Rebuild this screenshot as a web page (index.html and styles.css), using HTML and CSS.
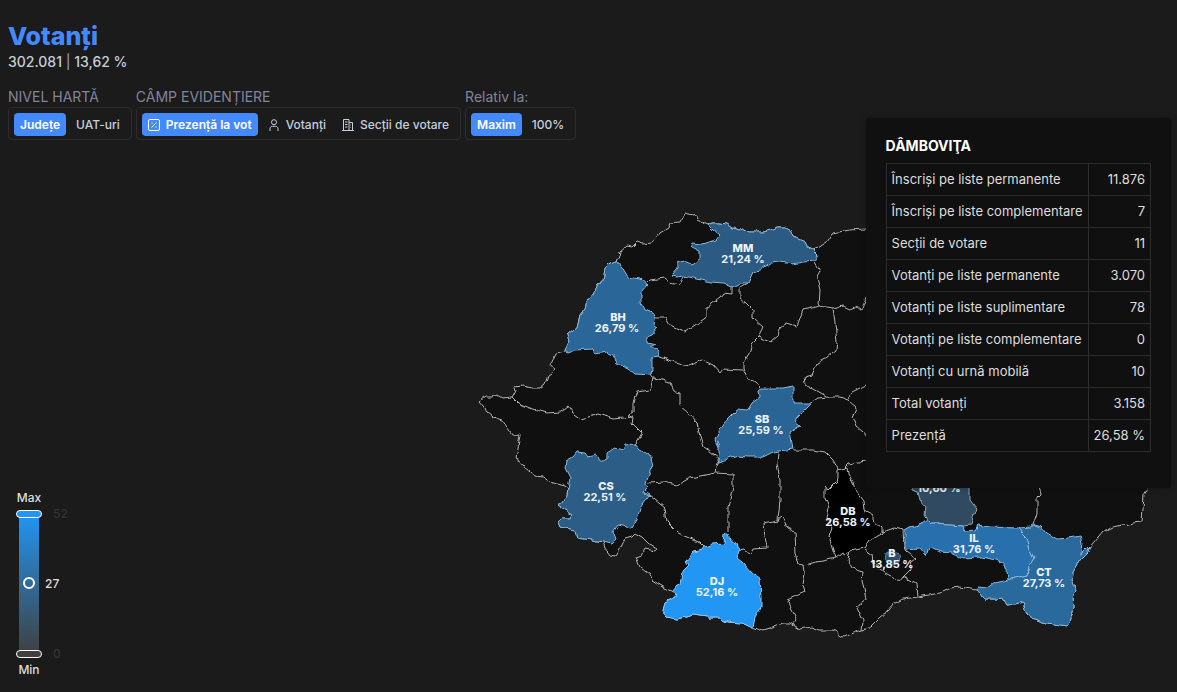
FILE: index.html
```html
<!DOCTYPE html>
<html lang="ro">
<head>
    <meta charset="UTF-8">
    <meta name="viewport" content="width=device-width, initial-scale=1.0">
    <title>Votanți</title>
    <link rel="stylesheet" href="styles.css">
</head>
<body>
<main class="page">

    <!-- Harta -->
    <svg class="map" viewBox="0 0 1177 692" role="img" aria-label="Harta județelor">
        <defs>
            <filter id="rough" x="0" y="0" width="1177" height="692" filterUnits="userSpaceOnUse" color-interpolation-filters="sRGB">
                <feTurbulence type="fractalNoise" baseFrequency="0.15" numOctaves="1" seed="4" result="noise"/>
                <feDisplacementMap in="SourceGraphic" in2="noise" scale="6" xChannelSelector="R" yChannelSelector="G"/>
            </filter>
        </defs>
        <g class="counties" filter="url(#rough)">
            <path class="land" d="M480,401 485,397 493,397 497,395 502,398 512,397 515,392 514,387 523,386 532,388 540,388 545,384 548,375 554,371 551,364 556,353 565,351 569,342 567,335 577,327 580,315 585,308 588,300 594,293 597,283 603,282 605,268 610,263 617,261 620,252 627,246 632,247 637,242 643,244 652,243 660,233 668,228 670,223 680,222 685,213 693,215 697,220 708,225 712,223 720,223 727,224 733,228 738,230 743,228 750,232 763,232 772,230 777,227 785,227 790,230 793,237 805,242 808,248 813,250 818,248 827,242 833,233 850,230 867,229 900,215 1000,240 1040,330 1090,400 1148,484 1147,490 1144,495 1142,522 1133,523 1113,527 1103,532 1095,542 1088,550 1080,560 1073,572 1072,580 1076,592 1073,597 1074,607 1070,617 1068,626 1047,623 1032,618 1027,615 1023,602 1015,604 1007,605 1003,598 995,599 985,599 982,594 976,590 960,587 950,588 940,593 917,597 903,599 893,604 888,610 880,617 870,627 862,630 843,637 832,630 820,630 812,627 800,629 790,623 782,623 770,628 760,631 753,628 742,623 728,622 720,618 710,618 707,616 693,614 687,617 677,619 667,617 663,612 665,602 675,597 676,593 672,591 665,588 652,580 650,575 640,567 636,557 642,555 645,549 655,551 657,548 648,543 642,537 635,533 632,536 625,538 620,548 615,556 610,555 605,548 603,542 593,540 577,538 575,530 560,527 558,522 562,518 570,518 572,514 558,505 562,503 567,495 568,488 565,486 550,482 543,477 535,476 525,468 520,461 516,459 518,448 520,434 513,435 507,427 502,420 493,417 487,412 485,407Z"/>

            <g class="borders">
                <path d="M647,283 650,280 665,278 670,282 679,284 683,277"/>
                <path d="M655,317 665,317 670,325 685,332 698,323 707,317 707,307 720,297 723,293 732,294 732,287"/>
                <path d="M748,283 740,288 740,298 748,305 753,310 753,318 763,327 758,337 770,342 778,335 780,328 787,323 797,326 803,310 819,306"/>
                <path d="M815,262 820,270 817,278 820,290 819,306 833,308 843,306 850,309 857,306 862,310 866,297"/>
                <path d="M833,308 835,323 837,343 836,350 823,360 817,363 812,375 805,377 806,385 812,388 828,397"/>
                <path d="M758,337 752,343 750,352 743,363 743,368 747,377 760,387"/>
                <path d="M660,357 675,362 688,366 702,360 713,365 720,373 723,369 743,370"/>
                <path d="M812,402 818,398 828,397 840,397 848,400 852,392 868,384"/>
                <path d="M848,400 857,408 853,417 857,427 868,436"/>
                <path d="M793,450 813,450 825,452 833,460 838,469"/>
                <path d="M845,467 848,464 857,462 868,461"/>
                <path d="M778,453 777,463 780,480 780,500 778,520 763,523 765,537 767,547 753,548 750,554 745,550 738,551"/>
                <path d="M778,520 782,517 787,528 795,532 796,553 799,564 803,565 827,560 836,558"/>
                <path d="M803,565 804,573 802,583 805,592 787,600 797,620 792,626"/>
                <path d="M850,551 848,560 852,568 863,572 862,582 865,593 866,600 857,607 863,620 862,630"/>
                <path d="M648,483 663,482 677,485 690,478 715,473 733,474 733,487 728,507 728,532"/>
                <path d="M715,473 717,463 719,462"/>
                <path d="M649,495 665,508 667,522 678,533 700,542 705,547"/>
                <path d="M651,375 653,378 663,380 670,382 675,392 680,393 680,405 688,412 697,422 700,437 703,447 717,457 719,462"/>
                <path d="M653,378 650,390 637,392 633,402 633,412 628,415 633,418 632,423 642,433 637,442 635,444"/>
                <path d="M512,397 518,403 530,408 547,413 560,412 568,406 572,412 582,419 598,414 613,419 633,417"/>
                <path d="M882,532 893,528 903,530 904,548 908,552 916,558 910,563 910,570 903,577 900,581 895,578 885,573 873,563 872,555 865,550"/>
                <path d="M903,577 916,584 917,597"/>
                <path d="M1038,484 1041,494 1037,498 1037,513 1033,525"/>
            </g>

            <path class="c-bh" d="M567,353 565,350 569,342 567,335 577,327 580,315 585,308 588,300 594,293 597,283 603,282 605,268 610,263 617,261 622,267 628,277 640,279 647,285 641,292 641,303 644,310 653,313 655,318 654,325 658,328 652,335 647,337 647,342 656,344 650,347 657,350 660,357 652,358 652,368 651,375 635,374 628,368 617,363 613,355 607,352 595,354 592,349 575,350Z"/>
            <path class="c-mm" d="M708,225 712,223 720,223 727,224 733,228 738,230 743,228 750,232 763,232 772,230 777,227 785,227 790,230 793,237 805,242 808,248 813,250 818,255 815,261 803,262 793,264 780,262 770,263 762,269 753,272 748,283 740,283 732,287 723,283 710,282 693,278 683,276 677,277 671,276 678,268 678,263 683,261 692,265 699,260 699,252 691,248 693,243 703,244 715,240 719,235 713,230Z"/>
            <path class="c-sb" d="M793,386 793,403 803,403 812,403 807,408 797,418 795,422 800,426 790,432 793,449 773,452 763,457 748,457 738,456 719,462 719,447 716,440 720,430 727,420 735,412 737,409 747,410 752,402 759,397 758,390 762,388 783,388Z"/>
            <path class="c-cs" d="M568,488 570,478 565,468 566,461 573,457 577,452 585,453 588,457 597,455 600,461 607,459 607,453 615,448 623,450 625,445 635,444 640,450 650,455 653,465 648,477 646,483 648,487 643,492 649,495 640,508 637,520 632,528 618,525 613,532 616,540 612,544 603,542 593,540 577,538 575,530 560,527 558,522 562,518 570,518 572,514 558,505 562,503 567,495Z"/>
            <path class="c-dj" d="M705,547 712,544 724,543 725,533 728,535 730,540 737,543 739,550 737,558 743,563 752,573 760,579 761,597 761,607 755,617 753,628 742,623 728,622 720,618 710,618 707,616 693,614 687,617 677,619 667,617 663,612 665,602 675,597 676,593 672,591 677,585 680,584 682,572 689,565 686,561 693,552 703,550Z"/>
            <path class="c-db" d="M838,470 845,468 848,467 849,475 853,482 855,490 863,500 864,510 873,515 873,520 882,528 882,533 870,540 865,548 850,551 845,555 842,553 836,558 833,550 829,537 832,528 827,518 829,508 825,498 825,486 828,490 836,482 838,477Z"/>
            <path class="c-bz" d="M912,482 912,490 918,492 920,500 926,507 925,515 928,520 932,524 950,525 963,526 971,525 973,517 976,508 970,500 970,482Z"/>
            <path class="c-b" d="M886,553 892,550 898,553 900,559 896,564 889,564 885,559Z"/>
            <path class="c-il" d="M905,530 910,527 923,524 928,520 932,524 950,525 963,526 965,531 975,530 978,525 990,527 1018,528 1022,533 1027,538 1030,550 1034,558 1030,565 1027,575 1008,580 1007,570 1003,567 1003,562 983,557 960,558 952,553 940,552 932,548 928,550 926,556 920,549 905,550Z"/>
            <path class="c-ct" d="M1018,528 1032,527 1033,525 1042,527 1047,533 1057,539 1070,538 1080,536 1082,542 1081,555 1090,546 1088,552 1080,560 1073,572 1072,580 1076,592 1073,597 1074,607 1070,617 1068,626 1047,623 1032,618 1027,615 1023,602 1015,604 1007,605 1003,598 995,599 985,599 982,594 976,590 978,587 988,588 995,583 1008,580 1027,575 1030,565 1034,558 1030,550 1027,538 1022,533Z"/>
        </g>

        <g class="names">
            <text><tspan class="code" x="743" y="252">MM</tspan><tspan x="743" y="263">21,24 %</tspan></text>
            <text><tspan class="code" x="618" y="321">BH</tspan><tspan x="617" y="332">26,79 %</tspan></text>
            <text><tspan class="code" x="762" y="423">SB</tspan><tspan x="761" y="434">25,59 %</tspan></text>
            <text><tspan class="code" x="606" y="490">CS</tspan><tspan x="605" y="501">22,51 %</tspan></text>
            <text><tspan class="code" x="717" y="585">DJ</tspan><tspan x="717" y="596">52,16 %</tspan></text>
            <text><tspan class="code" x="848" y="515">DB</tspan><tspan x="848" y="526">26,58 %</tspan></text>
            <text><tspan class="code" x="892" y="557">B</tspan><tspan x="892" y="568">13,85 %</tspan></text>
            <text><tspan class="code" x="974" y="542">IL</tspan><tspan x="974" y="553">31,76 %</tspan></text>
            <text><tspan class="code" x="1044" y="576">CT</tspan><tspan x="1044" y="587">27,73 %</tspan></text>
            <text><tspan x="939" y="492">10,60 %</tspan></text>
        </g>
    </svg>

    <header class="header">
        <h1>Votanți</h1>
        <p class="total">302.081 <span>|</span> 13,62 %</p>

        <div class="filters">
            <div class="filter" role="group" aria-labelledby="levelLabel">
                <span class="filter-label" id="levelLabel">NIVEL HARTĂ</span>
                <div class="segmented">
                    <button class="active">Județe</button>
                    <button>UAT-uri</button>
                </div>
            </div>
            <div class="filter" role="group" aria-labelledby="fieldLabel">
                <span class="filter-label" id="fieldLabel">CÂMP EVIDENȚIERE</span>
                <div class="segmented">
                    <button class="active">
                        <svg class="icon" viewBox="0 0 12 12"><rect x="0.5" y="0.5" width="11" height="11" rx="1.5"/><path d="M3.5 8.5l5-5M3.6 4h1M7.6 8h1"/></svg>
                        Prezență la vot
                    </button>
                    <button>
                        <svg class="icon" viewBox="0 0 12 12"><circle cx="6" cy="3.2" r="2.5"/><path d="M2 12V9.8C2 8.2 3.2 7.3 4.6 7.3h2.8C8.8 7.3 10 8.2 10 9.8V12"/></svg>
                        Votanți
                    </button>
                    <button>
                        <svg class="icon" viewBox="0 0 12 12"><path d="M0 11.5h12M1.5 11.5V.5H7v11M7 3.5h3.500v8M3 3h2.500M3 5.500h2.500M3 8h2.500M8.500 6h.5M8.500 8.500h.5"/></svg>
                        Secții de votare
                    </button>
                </div>
            </div>
            <div class="filter" role="group" aria-labelledby="relLabel">
                <span class="filter-label" id="relLabel">Relativ la:</span>
                <div class="segmented">
                    <button class="active">Maxim</button>
                    <button>100%</button>
                </div>
            </div>
        </div>
    </header>

    <!-- Scala de culori -->
    <div class="scale">
        <label for="scaleMax">Max</label>
        <div class="scale-body">
            <div class="scale-track">
                <input type="range" id="scaleMax" class="range-max" min="0" max="52" value="52">
                <input type="range" id="scaleMin" class="range-min" min="0" max="52" value="0">
                <span class="scale-dot"></span>
            </div>
            <div class="scale-values">
                <span class="dim">52</span>
                <span class="current">27</span>
                <span class="dim">0</span>
            </div>
        </div>
        <label for="scaleMin">Min</label>
    </div>

    <!-- Detalii județ -->
    <aside class="details">
        <h2>DÂMBOVIŢA</h2>
        <table>
            <tr><th scope="row">Înscriși pe liste permanente</th><td>11.876</td></tr>
            <tr><th scope="row">Înscriși pe liste complementare</th><td>7</td></tr>
            <tr><th scope="row">Secții de votare</th><td>11</td></tr>
            <tr><th scope="row">Votanți pe liste permanente</th><td>3.070</td></tr>
            <tr><th scope="row">Votanți pe liste suplimentare</th><td>78</td></tr>
            <tr><th scope="row">Votanți pe liste complementare</th><td>0</td></tr>
            <tr><th scope="row">Votanți cu urnă mobilă</th><td>10</td></tr>
            <tr><th scope="row">Total votanți</th><td>3.158</td></tr>
            <tr><th scope="row">Prezență</th><td>26,58 %</td></tr>
        </table>
    </aside>

</main>
</body>
</html>
```
FILE: styles.css
```css
* {
    box-sizing: border-box;
}

body {
    margin: 0;
    background-color: #1b1b1b;
    color: #dedede;
    font-family: Inter, "Liberation Sans", sans-serif;
    font-size: 13px;
}

.page {
    position: relative;
    min-height: 100vh;
    overflow: hidden;
}

/* map */
.map {
    position: absolute;
    top: 0;
    left: 0;
    width: 100%;
    height: 100%;
}

.counties path {
    stroke: #b4b4b4;
    stroke-width: 1;
    stroke-linejoin: round;
}

.counties .land {
    fill: #101010;
}

.counties .borders path {
    fill: none;
}

.counties .c-bh { fill: #2a6798; stroke: #8ab8dc; }
.counties .c-mm { fill: #2b5b83; stroke: #8ab8dc; }
.counties .c-sb { fill: #2a6494; stroke: #8ab8dc; }
.counties .c-cs { fill: #2b5d86; stroke: #8ab8dc; }
.counties .c-dj { fill: #2196f3; stroke: #8cc8f8; }
.counties .c-db { fill: #000; }
.counties .c-bz { fill: #2f4a61; stroke: #8fa3b3; }
.counties .c-b { fill: #2e4c66; stroke: #5a7f9e; }
.counties .c-il { fill: #2870ad; stroke: #8ab8dc; }
.counties .c-ct { fill: #29699c; stroke: #8ab8dc; }

.names text {
    fill: #eef3fa;
    font-size: 11px;
    font-weight: 700;
    text-anchor: middle;
}

.names .code {
    font-weight: 800;
}

/* header */
.header {
    position: relative;
    padding: 22px 8px 0;
}

h1 {
    margin: 0;
    color: #4589ff;
    font-size: 25px;
    font-weight: 800;
    line-height: 28px;
}

.total {
    margin: 2px 0 0;
    color: #c5cfdc;
    font-size: 14px;
    font-weight: 500;
    line-height: 20px;
}

.total span {
    color: #8d8d9b;
}

.filters {
    display: flex;
    flex-wrap: wrap;
    gap: 4px;
    margin-top: 15px;
}

.filter-label {
    display: block;
    color: #83839a;
    font-size: 14px;
    line-height: 20px;
}

.segmented {
    display: flex;
    gap: 4px;
    padding: 5px 5px 3px;
    border: 1px solid #2c2c2c;
    border-radius: 4px;
}

.segmented button {
    display: flex;
    align-items: center;
    gap: 6px;
    height: 23px;
    padding: 0 6px;
    border: none;
    border-radius: 4px;
    background: none;
    color: #c5cfdc;
    font-family: inherit;
    font-size: 12px;
    font-weight: 500;
    cursor: pointer;
}

.segmented button.active {
    background-color: #4589ff;
    color: white;
    font-weight: 600;
}

.icon {
    width: 12px;
    height: 12px;
    fill: none;
    stroke: currentColor;
    stroke-width: 1;
}

/* color scale */
.scale {
    position: absolute;
    left: 16px;
    bottom: 14px;
    font-size: 12px;
    font-weight: 500;
    line-height: 16px;
}

.scale label {
    display: block;
    width: 26px;
    text-align: center;
}

.scale-body {
    display: flex;
    gap: 3px;
    margin: 4px 0;
}

.scale-track {
    position: relative;
    width: 26px;
    height: 148px;
    background: linear-gradient(#2196f3, #404040) center / 20px 140px no-repeat;
}

.scale-track input {
    position: absolute;
    top: 0;
    left: 0;
    width: 26px;
    height: 148px;
    margin: 0;
    background: none;
    appearance: none;
    writing-mode: vertical-lr;
    direction: rtl;
    pointer-events: none;
}

.scale-track input::-webkit-slider-thumb {
    appearance: none;
    width: 26px;
    height: 8px;
    border: 1px solid white;
    border-radius: 4px;
    pointer-events: auto;
    cursor: pointer;
}

.range-max::-webkit-slider-thumb {
    background-color: #2196f3;
}

.range-min::-webkit-slider-thumb {
    background-color: #404040;
}

.scale-dot {
    position: absolute;
    top: 67px;
    left: 7px;
    width: 12px;
    height: 12px;
    border: 2px solid white;
    border-radius: 50%;
}

.scale-values {
    display: flex;
    flex-direction: column;
    justify-content: space-between;
    margin: -4px 0;
}

.scale-values .dim {
    padding-left: 8px;
    color: #333;
}

/* county details */
.details {
    position: absolute;
    top: 118px;
    right: 6px;
    padding: 18px 20px 36px;
    background-color: #101010;
    border-radius: 4px;
    box-shadow: 0 0 6px rgba(0, 0, 0, 0.3);
}

.details h2 {
    margin: 0 0 7px;
    color: white;
    font-size: 14px;
    font-weight: 700;
    line-height: 20px;
}

table {
    border-collapse: collapse;
}

th, td {
    height: 32px;
    padding: 0 5px 2px;
    border: 1px solid #2c2c2c;
    font-weight: 400;
    text-align: left;
}

td {
    text-align: right;
}
```
